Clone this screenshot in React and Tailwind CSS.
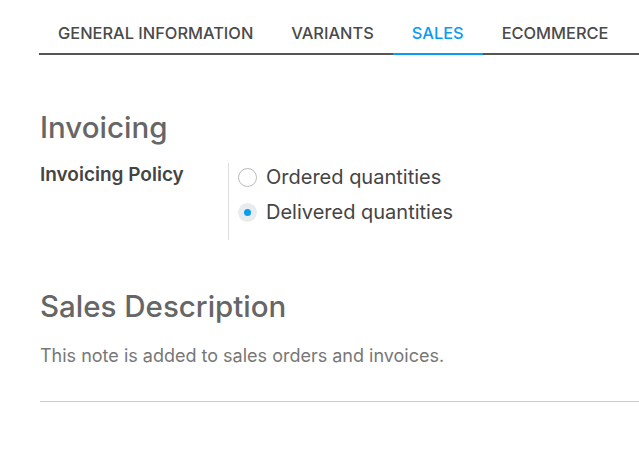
export default function App() {
  const tabs = ['GENERAL INFORMATION', 'VARIANTS', 'SALES', 'ECOMMERCE'];
  return (
    <div className="w-[639px] h-[476px] bg-white overflow-hidden font-['Inter',sans-serif]">
      <div className="pl-[39px] pt-[21px]">
        <div className="flex border-b-2 border-[#555]">
          {tabs.map((t) => (
            <div
              key={t}
              className={`px-[19px] pb-[8px] -mb-[2px] border-b-2 text-[16.4px] font-medium leading-[24px] ${
                t === 'SALES' ? 'text-[#0a9cf0] border-[#0a9cf0]' : 'text-[#4a4a4a] border-transparent'
              }`}
            >
              {t}
            </div>
          ))}
        </div>
      </div>

      <div className="pl-[40px]">
        <h2 className="mt-[52px] text-[29.5px] font-medium leading-[40px] text-[#666]">Invoicing</h2>
        <div className="mt-[16px] flex">
          <div className="w-[188px] text-[19px] font-semibold leading-[24px] text-[#444]">Invoicing Policy</div>
          <div className="border-l border-[#ddd] pl-[9px] pt-[2px] pb-[16px] flex flex-col gap-[11px]">
            <label className="flex items-center gap-[9px] text-[20px] leading-[24px] text-[#444]">
              <span className="w-[19px] h-[19px] rounded-full border border-[#bbb] bg-white" />
              Ordered quantities
            </label>
            <label className="flex items-center gap-[9px] text-[20px] leading-[24px] text-[#444]">
              <span className="w-[19px] h-[19px] rounded-full bg-[#e9ecef] flex items-center justify-center">
                <span className="w-[7px] h-[7px] rounded-full bg-[#0a9cf0]" />
              </span>
              Delivered quantities
            </label>
          </div>
        </div>

        <h2 className="mt-[46px] text-[29.5px] font-medium leading-[40px] text-[#666]">Sales Description</h2>
        <p className="mt-[17px] text-[18px] leading-[26px] text-[#777]">This note is added to sales orders and invoices.</p>
        <div className="mt-[32px] border-t border-[#ccc]" />
      </div>
    </div>
  );
}
